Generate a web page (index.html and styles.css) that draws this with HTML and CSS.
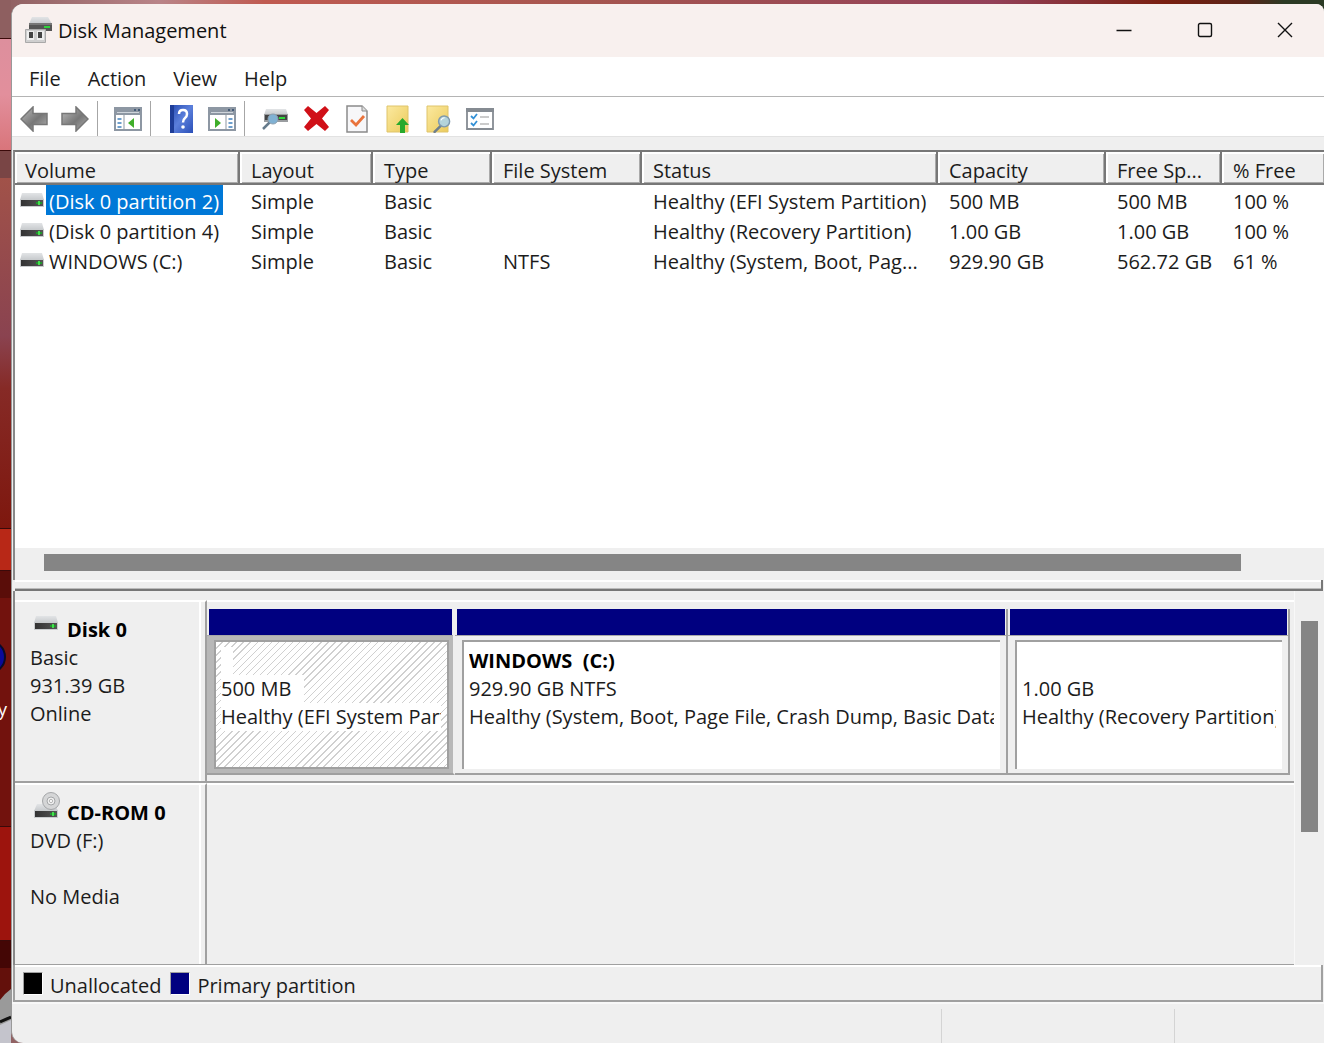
FILE: index.html
```html
<!DOCTYPE html>
<html lang="en">
<head>
<meta charset="utf-8">
<title>Disk Management</title>
<link rel="stylesheet" href="styles.css">
</head>
<body>
<svg width="0" height="0" class="defs" aria-hidden="true">
  <defs>
    <linearGradient id="metal" x1="0" y1="0" x2="0" y2="1"><stop offset="0" stop-color="#e2e4e6"/><stop offset="1" stop-color="#c6c9cc"/></linearGradient>
    <linearGradient id="dark" x1="0" y1="0" x2="1" y2="0"><stop offset="0" stop-color="#333"/><stop offset="1" stop-color="#555"/></linearGradient>
    <linearGradient id="arrow" x1="0" y1="0" x2="1" y2="1"><stop offset="0" stop-color="#bdbdbd"/><stop offset=".55" stop-color="#777"/><stop offset="1" stop-color="#b0b0b0"/></linearGradient>
    <linearGradient id="blue" x1="0" y1="0" x2="1" y2="1"><stop offset="0" stop-color="#2449b0"/><stop offset=".5" stop-color="#5b7fdb"/><stop offset="1" stop-color="#2a4fb8"/></linearGradient>
    <linearGradient id="folder" x1="0" y1="0" x2="1" y2="1"><stop offset="0" stop-color="#fbe9a0"/><stop offset="1" stop-color="#eccb5c"/></linearGradient>
    <symbol id="drive" viewBox="0 0 24 15">
      <path d="M2 0h20l2 7H0z" fill="url(#metal)"/>
      <path d="M0 6h24v8H0z" fill="#c9ccce"/>
      <path d="M1 7h22v6H1z" fill="url(#dark)"/>
      <path d="M16 9h6v2h-6z" fill="#1f9a2c"/><path d="M18 8h2v4h-2z" fill="#43e04d"/>
    </symbol>
    <symbol id="cdrom" viewBox="0 0 27 27">
      <path d="M3 12h18l3 7H0z" fill="url(#metal)"/>
      <circle cx="17" cy="9" r="8.5" fill="#d5d6d7" stroke="#a5a7a9"/>
      <circle cx="17" cy="9" r="4" fill="#eee" stroke="#a5a7a9"/><circle cx="17" cy="9" r="1.6" fill="#fff" stroke="#999" stroke-width=".7"/>
      <path d="M0 18h24v8H0z" fill="#c9ccce"/><path d="M1 19h22v6H1z" fill="url(#dark)"/>
      <path d="M16 21h6v2h-6z" fill="#1f9a2c"/><path d="M18 20h2v4h-2z" fill="#43e04d"/>
    </symbol>
    <symbol id="lens" viewBox="0 0 16 18">
      <path d="M7 11 1 17" stroke="#6f7f8c" stroke-width="2.4" stroke-linecap="round"/>
      <circle cx="10" cy="7" r="5.2" fill="#a9d3ee" fill-opacity=".85" stroke="#7f99ac" stroke-width="1.4"/>
      <path d="M7 6q1-2.500 3.500-2.500" stroke="#fff" fill="none"/>
    </symbol>
  </defs>
</svg>
<div class="desktop">
  <svg class="wallpaper" viewBox="0 0 11 1043" preserveAspectRatio="none" aria-hidden="true">
    <defs>
      <linearGradient id="w1" x1="0" y1="0" x2="0" y2="1"><stop offset="0" stop-color="#dd8f9d"/><stop offset=".5" stop-color="#e28f9c"/><stop offset="1" stop-color="#d9757b"/></linearGradient>
      <linearGradient id="w2" x1="0" y1="0" x2="0" y2="1"><stop offset="0" stop-color="#a15249"/><stop offset=".45" stop-color="#8a4350"/><stop offset=".6" stop-color="#862a26"/><stop offset="1" stop-color="#7e170e"/></linearGradient>
    </defs>
    <path fill="#8e5f60" d="M0 0h11v39H0z"/><path fill="url(#w1)" d="M0 39h11v111H0z"/>
    <path fill="#794545" d="M0 150h11v28H0z"/><path fill="url(#w2)" d="M0 178h11v351H0z"/>
    <path fill="#b82817" d="M0 529h11v42H0z"/><path fill="#5a0d09" d="M0 571h11v27H0z"/>
    <path fill="#72120d" d="M0 598h11v229H0z"/><path fill="#9d140d" d="M0 827h11v114H0z"/>
    <path fill="#440605" d="M0 941h11v27H0z"/><path fill="#63100b" d="M0 968h11v75H0z"/>
    <path d="M0 38.500h11M0 150.500h11M0 528.500h11M0 570.500h11M0 826.500h11M0 940.500h11" stroke="#3a0a0a"/>
    <path fill="#9a9a9a" d="M0 1000q4-6 11-11v54H0z"/><path d="M0 1022l11-5" stroke="#111" stroke-width="3"/><path fill="#c4c4cc" d="M0 1025l11-5v23H0z"/>
    <circle cx="-11" cy="657" r="16" fill="#0a0a9a" stroke="#0a0a28" stroke-width="2"/>
    <text x="-2" y="716" class="icon-caption">y</text>
  </svg>
  <main class="window">
    <header class="titlebar">
      <svg class="app-icon" viewBox="0 0 28 27" aria-hidden="true">
        <path d="M7 0h16l4 7H4z" fill="url(#metal)"/><path d="M4 6h23v8H4z" fill="#555"/><path d="M4 6h23v2H4z" fill="#777"/>
        <path d="M19 9h6v2h-6z" fill="#2fd33c"/>
        <path d="M.5 12.500h20v13H.5z" fill="#cfcfcf" stroke="#a9a9a9"/><path d="M2 14h7v9H2zM12 14h7v9h-7z" fill="#eee"/><path d="M4 15h4v6H4zM13 15h4v6h-4z" fill="#444"/>
      </svg>
      <h1>Disk Management</h1>
      <div class="caption-buttons">
        <button aria-label="Minimize"><svg viewBox="0 0 16 16"><path d="M.5 8.500h15"/></svg></button>
        <button aria-label="Maximize"><svg viewBox="0 0 16 16"><rect x="1.500" y="1.500" width="13" height="13" rx="1.500"/></svg></button>
        <button aria-label="Close"><svg viewBox="0 0 16 16"><path d="m1 1 14 14M15 1 1 15"/></svg></button>
      </div>
    </header>
    <nav class="menubar">
      <button>File</button><button>Action</button><button>View</button><button>Help</button>
    </nav>
    <div class="toolbar">
      <div class="group">
        <button aria-label="Back"><svg width="28" height="26" viewBox="0 0 28 26"><path d="M1 13 13 1v6.500h14v11H13V25z" fill="url(#arrow)" stroke="#777" stroke-width="1.500"/></svg></button>
        <button aria-label="Forward"><svg width="28" height="26" viewBox="0 0 28 26"><path d="M27 13 15 1v6.500H1v11h14V25z" fill="url(#arrow)" stroke="#777" stroke-width="1.500"/></svg></button>
      </div>
      <div class="group">
        <button aria-label="Show console tree"><svg width="28" height="24" viewBox="0 0 28 24"><path d="M1 1h26v22H1z" fill="#fff" stroke="#8d97a3" stroke-width="2"/><path d="M1 1h26v7H1z" fill="#8d97a3"/><path d="M3 5.500h22" stroke="#cfd5dc"/><path d="M20 3h2m2 0h2" stroke="#445b78" stroke-width="2"/><path d="M10 8v14" stroke="#8d97a3"/><path d="M3.500 12h4m-4 4h4m-4 4h4" stroke="#3f80bd" stroke-width="1.500"/><path d="m20 11v10l-6-5z" fill="#3fae2a"/></svg></button>
      </div>
      <div class="group">
        <button aria-label="Help"><svg width="23" height="28" viewBox="0 0 23 28"><path d="M0 0h23v28H0z" fill="url(#blue)"/><path d="M0 0h4v28H0z" fill="#1e3d98"/><path d="M9 9q0-4 4-4t4 4q0 2.500-2 4t-2 4.500" fill="none" stroke="#fff" stroke-width="2.500"/><circle cx="13" cy="22" r="1.800" fill="#fff"/></svg></button>
        <button aria-label="Show action pane"><svg width="28" height="24" viewBox="0 0 28 24"><path d="M1 1h26v22H1z" fill="#fff" stroke="#8d97a3" stroke-width="2"/><path d="M1 1h26v7H1z" fill="#8d97a3"/><path d="M3 5.500h22" stroke="#cfd5dc"/><path d="M20 3h2m2 0h2" stroke="#445b78" stroke-width="2"/><path d="M18 8v14" stroke="#8d97a3"/><path d="M20.500 12h4m-4 4h4m-4 4h4" stroke="#3f80bd" stroke-width="1.500"/><path d="m7 11v10l6-5z" fill="#3fae2a"/></svg></button>
      </div>
      <div class="group">
        <button aria-label="Rescan disks"><svg width="28" height="24" viewBox="0 0 28 24"><path d="M5 2h20l2 6H3z" fill="url(#metal)"/><path d="M3 7h24v8H3z" fill="#9a9da0"/><path d="M4 8h22v5H4z" fill="#444"/><path d="M18 10h6v2h-6z" fill="#30d83c"/><path d="m9 15-7 7" stroke="#667b8c" stroke-width="2.500"/><circle cx="12" cy="12" r="5" fill="#80b1d3" stroke="#8da0af"/></svg></button>
        <button aria-label="Delete"><svg width="25" height="25" viewBox="0 0 25 25"><path d="m4 0 8.500 7L21 0l4 4-7 8.500 7 8.500-4 4-8.500-7L4 25l-4-4 7-8.500L0 4z" fill="#d01018"/></svg></button>
        <button aria-label="Properties"><svg width="22" height="28" viewBox="0 0 22 28"><path d="M1 1h15l5 5v21H1z" fill="#f7f7f9" stroke="#8b8b8b" stroke-width="1.500"/><path d="M16 1v5h5" fill="#ddd" stroke="#8b8b8b"/><path d="m5 15 5 5 8-9" fill="none" stroke="#e9733c" stroke-width="2.800"/></svg></button>
        <button aria-label="Attach disk"><svg width="24" height="28" viewBox="0 0 24 28"><path d="M1 1h21v26H1z" fill="url(#folder)" stroke="#dfc46b"/><path d="m16.500 13 6.500 7h-4v8h-5v-8h-4z" fill="#27a92c"/></svg></button>
        <button aria-label="Find"><svg width="26" height="28" viewBox="0 0 26 28"><path d="M1 1h21v26H1z" fill="url(#folder)" stroke="#dfc46b"/><use href="#lens" x="7" y="9" width="18" height="19"/></svg></button>
        <button aria-label="Tasks"><svg width="28" height="22" viewBox="0 0 28 22"><path d="M1 1h26v20H1z" fill="#fff" stroke="#858b92" stroke-width="1.800"/><path d="M0 0h28v4H0z" fill="#858b92"/><path d="m5 8 2.500 2.500L11 6m-6 9 2.500 2.500L11 13" fill="none" stroke="#3391d7" stroke-width="1.800"/><path d="M14 9h9m-9 7h9" stroke="#bbb" stroke-width="1.500"/></svg></button>
      </div>
    </div>
    <section class="volumes">
      <table>
        <colgroup><col class="c-volume"><col class="c-layout"><col class="c-type"><col class="c-fs"><col class="c-status"><col class="c-capacity"><col class="c-free"><col></colgroup>
        <thead><tr><th>Volume</th><th>Layout</th><th>Type</th><th>File System</th><th>Status</th><th>Capacity</th><th>Free Sp...</th><th>% Free</th></tr></thead>
        <tbody>
          <tr><td><div class="name"><svg><use href="#drive"/></svg><span class="selected">(Disk 0 partition 2)</span></div></td><td>Simple</td><td>Basic</td><td></td><td>Healthy (EFI System Partition)</td><td>500 MB</td><td>500 MB</td><td>100 %</td></tr>
          <tr><td><div class="name"><svg><use href="#drive"/></svg><span>(Disk 0 partition 4)</span></div></td><td>Simple</td><td>Basic</td><td></td><td>Healthy (Recovery Partition)</td><td>1.00 GB</td><td>1.00 GB</td><td>100 %</td></tr>
          <tr><td><div class="name"><svg><use href="#drive"/></svg><span>WINDOWS (C:)</span></div></td><td>Simple</td><td>Basic</td><td>NTFS</td><td>Healthy (System, Boot, Pag...</td><td>929.90 GB</td><td>562.72 GB</td><td>61 %</td></tr>
        </tbody>
      </table>
      <div class="hscroll"><div class="thumb"></div></div>
    </section>
    <div class="splitter"></div>
    <section class="graph">
      <div class="disks">
        <article class="disk">
          <div class="disk-label">
            <h2><svg class="drive"><use href="#drive"/></svg>Disk 0</h2>
            <p>Basic</p><p>931.39 GB</p><p>Online</p>
          </div>
          <div class="partitions">
            <div class="partition active"><div class="stripe"></div><div class="frame"><div class="inner">
              <p><span class="blank"></span></p><p><span class="size">500 MB</span></p><p><span>Healthy (EFI System Partition)</span></p></div></div></div>
            <div class="partition"><div class="stripe"></div><div class="frame"><div class="inner">
              <p><b>WINDOWS&nbsp; (C:)</b></p><p>929.90 GB NTFS</p><p>Healthy (System, Boot, Page File, Crash Dump, Basic Data Partition)</p></div></div></div>
            <div class="partition"><div class="stripe"></div><div class="frame"><div class="inner">
              <p></p><p>1.00 GB</p><p>Healthy (Recovery Partition)</p></div></div></div>
          </div>
        </article>
        <article class="disk">
          <div class="disk-label">
            <h2><svg class="cdrom"><use href="#cdrom"/></svg>CD-ROM 0</h2>
            <p>DVD (F:)</p><p></p><p>No Media</p>
          </div>
          <div class="partitions"></div>
        </article>
      </div>
      <div class="vscroll"><div class="thumb"></div></div>
    </section>
    <div class="legend">
      <span class="swatch unallocated"></span><span>Unallocated</span>
      <span class="swatch primary"></span><span>Primary partition</span>
    </div>
    <footer class="statusbar"><span></span><span></span><span></span></footer>
  </main>
</div>
</body>
</html>
```
FILE: styles.css
```css
* { box-sizing: border-box; }
body {
  margin: 0;
  font-family: "Open Sans", "Noto Sans", sans-serif;
  font-size: 20px;
  line-height: 28px;
  color: #1c1c1c;
  overflow: hidden;
}
h1, h2, p { margin: 0; font-size: inherit; }
button { border: 0; padding: 0; background: none; font: inherit; color: inherit; }
.defs { position: absolute; }
.desktop {
  display: grid;
  grid-template-columns: 11px minmax(0, 1fr);
  height: 100vh;
  background: linear-gradient(90deg, #8e5f60, #b98488 12%, #c05a50 20%, #a5554f 45%, #934058 75%, #7a1f10 88%, #5a2418 94%, #2b3a24 97%);
}
.wallpaper { width: 11px; height: 100vh; }
.icon-caption { fill: #fff; font-size: 18px; }
.window {
  display: flex;
  flex-direction: column;
  margin-top: 4px;
  border-left: 1px solid #999;
  border-radius: 12px 8px 0 12px;
  background: #efefef;
  overflow: hidden;
}

.titlebar { display: flex; align-items: center; height: 53px; padding-left: 13px; background: #f8f0ee; color: #111; }
.app-icon { width: 28px; height: 27px; margin-right: 5px; }
.titlebar h1 { flex: 1; font-weight: 400; }
.caption-buttons { display: flex; }
.caption-buttons button { width: 81px; height: 52px; padding-bottom: 2px; display: grid; place-items: center; }
.caption-buttons button:last-child { width: 79px; }
.caption-buttons svg { width: 16px; height: 16px; fill: none; stroke: #111; stroke-width: 1.4; }

.menubar { display: flex; gap: 27px; height: 40px; padding: 4px 0 0 17px; background: #fff; border-bottom: 1px solid #b4b4b4; }
.toolbar { display: flex; height: 40px; padding: 4px 0 0 2px; background: #fff; border-bottom: 1px solid #e2e2e2; }
.group { display: flex; gap: 1px; }
.group + .group { border-left: 1px solid #a6a6a6; margin-left: 2px; padding-left: 10px; }
.group button { width: 40px; display: grid; place-items: center; }

.volumes {
  flex: 0 0 430px;
  display: flex;
  flex-direction: column;
  margin: 13px 0 0 1px;
  border-top: 2px solid #777;
  border-left: 2px solid #888;
  background: #fff;
}
table { width: 100%; table-layout: fixed; border-collapse: separate; border-spacing: 0; }
.c-volume { width: 225px; }
.c-layout { width: 133px; }
.c-type { width: 119px; }
.c-fs { width: 150px; }
.c-status { width: 296px; }
.c-capacity { width: 168px; }
.c-free { width: 116px; }
th {
  height: 33px;
  padding: 7px 0 0 11px;
  text-align: left;
  font-weight: 400;
  line-height: 24px;
  background: #efefef;
  border-right: 2px solid #777;
  border-bottom: 2px solid #777;
  box-shadow: inset 2px 2px #fff, inset -1px -1px #aaa;
}
th:first-child { padding-left: 10px; }
th:last-child { border-right: 0; }
td { height: 30px; padding: 3px 0 0 11px; white-space: nowrap; line-height: 27px; }
td:first-child { padding: 0 0 0 5px; }
.name { display: flex; }
.name svg { width: 24px; height: 15px; margin: 8px 2px 0 0; }
.name span { height: 30px; padding: 3px 4px 0 3px; }
.name .selected { background: #0078d7; color: #fff; }
.hscroll { margin-top: auto; height: 32px; padding: 6px 83px 0 29px; background: #efefef; }
.hscroll .thumb { height: 17px; background: #858585; }
.splitter { flex: 0 0 11px; margin: 0 1px 0 3px; border: solid #777; border-width: 0 2px 2px 0; box-shadow: inset 0 2px #fff, inset 0 -1px #bbb; }

.graph { flex: 1; display: flex; min-height: 0; margin-left: 1px; border-left: 2px solid #888; }
.disks { flex: 1; min-width: 0; padding-top: 9px; border-right: 1px solid #f8f8f8; }
.disk { display: grid; grid-template-columns: 192px minmax(0, 1fr); height: 183px; }
.disk-label {
  padding: 14px 0 0 15px;
  border-top: 2px solid #fff;
  border-right: 2px solid #a0a0a0;
  border-bottom: 2px solid #a0a0a0;
  box-shadow: inset -4px 0 #efefef, inset -6px 0 #fff;
}
.disk-label p { height: 28px; }
h2 { display: flex; height: 28px; font-weight: 700; color: #000; }
h2 svg { flex: none; margin-left: 4px; }
.drive { width: 24px; height: 15px; margin-right: 9px; }
.cdrom { width: 27px; height: 27px; margin-top: -7px; margin-right: 6px; }
.partitions {
  display: grid;
  grid-template-columns: 248fr 553fr 282fr;
  padding: 7px 4px 6px 0;
  border-top: 2px solid #fff;
  border-bottom: 2px solid #a0a0a0;
}
.partition { display: flex; flex-direction: column; min-width: 0; border-right: 2px solid #a0a0a0; border-bottom: 2px solid #a0a0a0; }
.stripe { height: 26px; margin: 0 1px 0 2px; background: #000080; }
.frame { flex: 1; padding: 4px 6px 4px 7px; border-top: 1px solid #a8a8a8; }
.inner { height: 100%; padding: 5px 6px 0 5px; background: #fff; border: solid #a0a0a0; border-width: 2px 0 0 2px; white-space: nowrap; overflow: hidden; }
.inner p { height: 28px; overflow: hidden; }
.inner b { color: #000; }
.active { border-right-color: #efefef; }
.active .frame { padding-right: 4px; background: #b8b8b8; }
.active .inner { border: 2px solid #a0a0a0; background: repeating-linear-gradient(135deg, #fff 0 4px, #d0d0d0 4px 5px); }
.active span { display: inline-block; height: 28px; background: #fff; }
.active .blank { width: 12px; }
.active .size { padding-right: 13px; }
.vscroll { width: 29px; padding: 30px 6px 0; }
.vscroll .thumb { height: 211px; background: #858585; }

.legend {
  flex: 0 0 36px;
  display: flex;
  margin: 0 1px 0 1px;
  padding: 7px 0 0 8px;
  border: solid #a0a0a0;
  border-width: 0 2px 2px 2px;
  box-shadow: inset 0 2px #fff;
}
.swatch { width: 20px; height: 23px; margin-right: 7px; border: 1px solid #a0a0a0; border-right-color: #fff; border-bottom-color: #fff; }
.unallocated { background: #000; }
.primary { background: #000080; margin-left: 9px; }
.statusbar { flex: 0 0 41px; display: flex; padding-top: 5px; border-top: 2px solid #f8f8f8; }
.statusbar span { width: 150px; border-left: 1px solid #d4d4d4; }
.statusbar span:first-child { flex: 1; border: 0; }
.statusbar span:nth-child(2) { width: 233px; }
```
